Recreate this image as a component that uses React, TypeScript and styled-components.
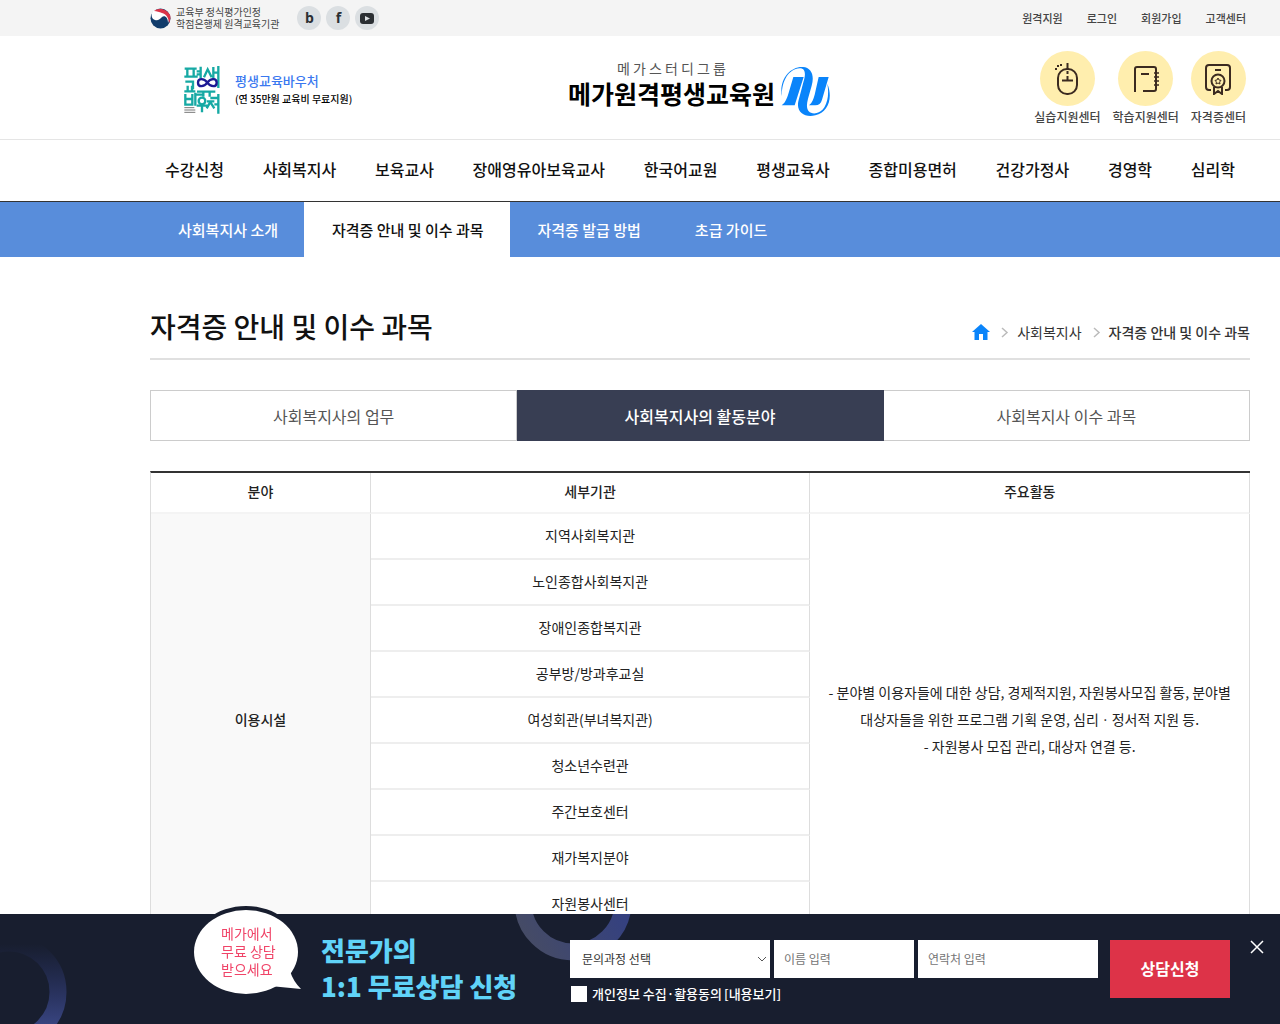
import React from "react";
import styled, { createGlobalStyle } from "styled-components";

const GlobalStyle = createGlobalStyle`
  * { box-sizing: border-box; }
  body {
    margin: 0;
    background: #fff;
    color: #222;
    font-family: "Noto Sans CJK KR", "Noto Sans", sans-serif;
    font-size: 14px;
  }
  a { color: inherit; text-decoration: none; }
  ul { list-style: none; margin: 0; padding: 0; }
  button, input, select { font-family: inherit; border-radius: 0; }
`;

const Inner = styled.div`
  padding: 0 30px 0 150px;
`;

/* top bar */
const TopBar = styled.div`
  background: #f4f4f4;
`;
const TopRow = styled(Inner)`
  display: flex;
  align-items: center;
  height: 36px;
`;
const Certified = styled.p`
  display: flex;
  align-items: center;
  gap: 5px;
  margin: 0 18px 0 0;
  font-size: 10px;
  line-height: 12px;
  color: #444;
`;
const Social = styled.ul`
  display: flex;
  gap: 5px;
`;
const SocialLink = styled.a`
  display: flex;
  align-items: center;
  justify-content: center;
  width: 24px;
  height: 24px;
  border-radius: 50%;
  background: #dbdfe2;
  color: #2b2f33;
  font: 700 14px/24px "Open Sans", sans-serif;
`;
const UserLinks = styled.ul`
  display: flex;
  gap: 24px;
  margin-left: auto;
  padding-right: 4px;
  font-size: 11px;
  font-weight: 500;
  color: #444;
`;

/* header */
const Header = styled.header`
  border-bottom: 1px solid #e5e5e5;
`;
const HeaderRow = styled(Inner)`
  display: grid;
  grid-template-columns: 1fr auto 1fr;
  align-items: center;
  height: 103px;
`;
const Voucher = styled.a`
  display: flex;
  align-items: center;
  gap: 14px;
  padding-left: 34px;
  padding-top: 4px;
`;
const VoucherText = styled.span`
  display: flex;
  flex-direction: column;
  font-size: 10px;
  font-weight: 500;
  line-height: 17px;
  color: #000;
  white-space: nowrap;
`;
const VoucherName = styled.strong`
  font-size: 13px;
  font-weight: 500;
  line-height: 18px;
  color: #3a78f0;
`;
const Brand = styled.a`
  display: flex;
  align-items: flex-end;
  gap: 5px;
  padding-top: 3px;
`;
const BrandText = styled.span`
  display: flex;
  flex-direction: column;
  align-items: center;
  padding-bottom: 6px;
  white-space: nowrap;
`;
const BrandGroup = styled.span`
  font-size: 14px;
  line-height: 14px;
  color: #555;
`;
const BrandName = styled.strong`
  font-size: 25px;
  font-weight: 700;
  line-height: 36px;
  color: #000;
`;
const Centers = styled.ul`
  display: flex;
  justify-content: flex-end;
  gap: 12px;
  padding: 2px 4px 0 0;
`;
const CenterLink = styled.a`
  display: flex;
  flex-direction: column;
  align-items: center;
  gap: 2px;
  font-size: 12px;
  font-weight: 500;
  line-height: 18px;
  color: #444;
  white-space: nowrap;
`;
const CenterIcon = styled.span`
  display: flex;
  align-items: center;
  justify-content: center;
  width: 55px;
  height: 55px;
  border-radius: 50%;
  background: #ffeeae;
`;

/* navigation */
const MainNav = styled.nav`
  padding-bottom: 3px;
  border-bottom: 1px solid #333;
`;
const MainMenu = styled.ul`
  display: flex;
  justify-content: space-between;
  padding: 0 45px 0 165px;
  font-size: 16px;
  font-weight: 500;
  line-height: 58px;
  color: #111;
  white-space: nowrap;
`;
const SubNav = styled.nav`
  background: #588ddb;
`;
const SubMenu = styled.ul`
  display: flex;
  padding: 0 30px 0 150px;
`;
const SubLink = styled.a<{ $active?: boolean }>`
  display: block;
  padding: 0 26px 0 28px;
  font-size: 15px;
  font-weight: 500;
  line-height: 55px;
  background: ${(p) => (p.$active ? "#fff" : "transparent")};
  color: ${(p) => (p.$active ? "#111" : "#fff")};
`;

/* content */
const Main = styled.main`
  padding: 50px 30px 80px 150px;
`;
const TitleRow = styled.div`
  display: flex;
  align-items: flex-end;
  justify-content: space-between;
  padding-bottom: 13px;
  border-bottom: 2px solid #e0e0e0;
`;
const Title = styled.h1`
  margin: 0;
  font-size: 28px;
  font-weight: 500;
  line-height: 38px;
  color: #111;
`;
const Crumbs = styled.ol`
  display: flex;
  align-items: center;
  gap: 11px;
  margin: 0;
  padding: 0;
  list-style: none;
  line-height: 26px;
  color: #333;
`;
const Crumb = styled.li<{ $current?: boolean }>`
  display: flex;
  align-items: center;
  gap: 8px;
  font-weight: ${(p) => (p.$current ? 500 : 400)};
`;
const Tabs = styled.div`
  display: flex;
  margin: 30px 0;
`;
const Tab = styled.button<{ $active?: boolean }>`
  flex: 1;
  height: 51px;
  padding: 0;
  border: 1px solid ${(p) => (p.$active ? "#383e53" : "#ccc")};
  background: ${(p) => (p.$active ? "#383e53" : "#fff")};
  color: ${(p) => (p.$active ? "#fff" : "#555")};
  font-size: 16px;
  font-weight: ${(p) => (p.$active ? 500 : 400)};
  & + & { border-left-width: 0; }
`;
const Table = styled.table`
  width: 100%;
  table-layout: fixed;
  border-collapse: separate;
  border-spacing: 0;
  border-top: 2px solid #333;
  border-left: 1px solid #ddd;
  text-align: center;
  th, td { border-right: 1px solid #ddd; }
`;
const HeadCell = styled.th<{ $width: string }>`
  width: ${(p) => p.$width};
  height: 41px;
  padding: 0 0 3px;
  border-bottom: 2px solid #f4f4f4;
  font-weight: 500;
`;
const GroupCell = styled.th`
  padding: 0 0 4px;
  background: #f9f9f9;
  border-bottom: 1px solid #ddd;
  font-weight: 500;
`;
const Cell = styled.td`
  height: 46px;
  padding: 0 0 2px;
  border-bottom: 2px solid #eee;
  line-height: 27px;
`;
const WorkCell = styled(Cell)`
  white-space: nowrap;
`;

/* consulting bar */
const Bar = styled.aside`
  position: fixed;
  left: 0;
  right: 0;
  bottom: 0;
  height: 110px;
  background: #181e2f;
`;
const Rings = styled.svg`
  position: absolute;
  left: 0;
  top: 0;
`;
const BarRow = styled.div`
  position: relative;
  display: flex;
  align-items: flex-start;
  padding: 0 50px 0 192px;
`;
const Bubble = styled.div`
  position: relative;
  flex: none;
  width: 110px;
  height: 90px;
  margin: -9px 19px 0 0;
  svg { position: absolute; left: 0; top: 0; }
`;
const BubbleText = styled.p`
  position: relative;
  margin: 0;
  padding: 19px 0 0 29px;
  font-size: 14px;
  line-height: 18px;
  color: #f04468;
`;
const Slogan = styled.p`
  margin: 18px 0 0;
  font-size: 26px;
  font-weight: 900;
  line-height: 36px;
  color: #60d3f8;
  white-space: nowrap;
`;
const Form = styled.form`
  display: flex;
  gap: 12px;
  margin: 26px 0 0 auto;
`;
const Fields = styled.div`
  display: flex;
  gap: 4px;
`;
const field = `
  height: 38px;
  border: 0;
  background: #fff;
  color: #333;
  font-size: 12px;
`;
const SelectBox = styled.div`
  position: relative;
  svg { position: absolute; right: 3px; top: 16px; pointer-events: none; }
`;
const Select = styled.select`
  ${field}
  width: 200px;
  padding: 0 12px 2px;
  appearance: none;
`;
const TextField = styled.input<{ $width: number }>`
  ${field}
  width: ${(p) => p.$width}px;
  padding: 0 10px 2px;
  &::placeholder { color: #757575; }
`;
const Agree = styled.div`
  display: flex;
  align-items: center;
  gap: 2px;
  margin-top: 6px;
  font-size: 13px;
  font-weight: 500;
  line-height: 20px;
  color: #fff;
  input {
    appearance: none;
    width: 16px;
    height: 16px;
    margin: 0 3px 0 1px;
    background: #fff;
  }
  input:checked { box-shadow: inset 0 0 0 4px #fff; background: #dd3348; }
`;
const Submit = styled.button`
  width: 120px;
  height: 58px;
  padding: 0 0 2px;
  border: 0;
  background: #dd3348;
  color: #fff;
  font-size: 16px;
  font-weight: 700;
`;
const Close = styled.button`
  position: absolute;
  right: 16px;
  top: 26px;
  display: flex;
  padding: 0;
  border: 0;
  background: none;
`;

const VoucherLogo = () => (
  <svg width="37" height="48" viewBox="0 0 111 144" fill="none" stroke="#16a9a4" strokeWidth="7">
    <path d="M2 8H38M10 8V29M29 8V29M1 32H41M38 16H49M38 25H49M50 2V36" />
    <path d="M60 34L71 10L83 34M88 3V42M88 20H101M103 0V66" />
    <path d="M4 47H27V70M11 59V74M24 59V74M1 76H34" />
    <path d="M39 77H94M58 77V92M77 77V92M35 86H58" />
    <path d="M4 84V116H25V84M4 99H25M34 80V119" />
    <path d="M38 119H70M54 119V139M79 96H101M69 106H91M80 106L68 127M80 110L91 127M103 84V143M91 115H103" />
    <circle cx="54" cy="105" r="10" />
    <path d="M70 50C60 36 42 36 42 50S60 64 70 50C80 36 98 36 98 50S80 64 70 50Z" stroke="#1d1a94" />
    <path d="M1 125H31M1 132H34M1 139H34" stroke="#777" strokeWidth="3" />
  </svg>
);

const BrandMark = () => (
  <svg width="52" height="52" viewBox="18 18 156 156" fill="#0a84fa">
    <path d="M24 112C14 66 45 22 87 24C112 26 122 49 113 80L102 119C94 149 101 165 125 163C151 160 169 124 160 74C178 118 162 160 124 169C93 177 66 160 73 127L88 70C98 39 91 28 77 28C42 30 22 70 24 112Z" />
    <path d="M58 54H89L62 139H23C36 129 40 114 45 98Z" />
    <path d="M134 54H164L144 122C141 133 134 139 124 139H105C115 130 118 121 122 107Z" />
  </svg>
);

const MouseIcon = () => (
  <svg width="26" height="34" viewBox="0 0 26 34" fill="none" stroke="#3b2a20" strokeWidth="2">
    <rect x="4" y="7" width="19" height="25" rx="9" />
    <path d="M13.500 1V7M13.500 9V12M13.500 14V18M8 18.500H19" />
    <path d="M1 7H3M3 4H5M6 3H8" />
  </svg>
);
const NotebookIcon = () => (
  <svg width="26" height="28" viewBox="0 0 26 28" fill="none" stroke="#3b2a20" strokeWidth="2">
    <path d="M2 27V4Q2 2 4 2H21Q23 2 23 4V24Q23 26 21 26H10M8 9H16" />
    <path d="M21 8H26M21 12H26M21 16H26M21 20H26" strokeWidth="1.500" />
  </svg>
);
const CertificateIcon = () => (
  <svg width="26" height="32" viewBox="0 0 26 32" fill="none" stroke="#3b2a20" strokeWidth="2">
    <path d="M6 27H4Q1 27 1 24V5Q1 2 4 2H22Q25 2 25 5V24Q25 27 22 27H20M10 7H16" />
    <circle cx="13" cy="18" r="6.500" />
    <path d="M9 24V31L13 28L17 31V24" />
    <path d="M13 15L14 17L16 17.400L14.600 19L15 21L13 20L11 21L11.400 19L10 17.400L12 17Z" strokeWidth="1" />
  </svg>
);
const Chevron = () => (
  <svg width="8" height="12" viewBox="0 0 8 12" fill="none" stroke="#bbb" strokeWidth="1.500">
    <path d="M1 2L6 6.500L1 11" />
  </svg>
);

const centers = [
  { label: "실습지원센터", icon: <MouseIcon /> },
  { label: "학습지원센터", icon: <NotebookIcon /> },
  { label: "자격증센터", icon: <CertificateIcon /> },
];
const menu = ["수강신청", "사회복지사", "보육교사", "장애영유아보육교사", "한국어교원", "평생교육사", "종합미용면허", "건강가정사", "경영학", "심리학"];
const subMenu = ["사회복지사 소개", "자격증 안내 및 이수 과목", "자격증 발급 방법", "초급 가이드"];
const tabs = ["사회복지사의 업무", "사회복지사의 활동분야", "사회복지사 이수 과목"];
const places = ["지역사회복지관", "노인종합사회복지관", "장애인종합복지관", "공부방/방과후교실", "여성회관(부녀복지관)", "청소년수련관", "주간보호센터", "재가복지분야", "자원봉사센터"];

export default function App() {
  return (
    <>
      <GlobalStyle />
      <TopBar>
        <TopRow>
          <Certified>
            <svg width="21" height="21" viewBox="0 0 21 21">
              <circle cx="10.500" cy="10.500" r="10" fill="#123c6b" />
              <path d="M4 3A10 10 0 0 1 19 15C20 8 15 4 11 5C8 6 5 6 4 3Z" fill="#dc3449" />
              <path d="M2 5C3 1 9 1 14 4C19 7 20 11 18 15C18 10 15 7 12 9C10 11 8 13 5 12C2 11 1 8 2 5Z" fill="#fff" />
              <path d="M4 3C9 -1 17 1 20 7C21 10 20 13 19 15C19 10 16 6 12 5C9 4 7 3 4 3Z" fill="#dc3449" />
            </svg>
            <span>교육부 정식평가인정<br />학점은행제 원격교육기관</span>
          </Certified>
          <Social>
            <li><SocialLink href="#blog">b</SocialLink></li>
            <li><SocialLink href="#facebook">f</SocialLink></li>
            <li>
              <SocialLink href="#youtube" aria-label="YouTube">
                <svg width="14" height="11" viewBox="0 0 14 11">
                  <rect width="14" height="11" rx="3" fill="#2b2f33" />
                  <path d="M5 3L10 5.500L5 8Z" fill="#dbdfe2" />
                </svg>
              </SocialLink>
            </li>
          </Social>
          <UserLinks>
            {["원격지원", "로그인", "회원가입", "고객센터"].map((t) => (
              <li key={t}><a href="#user">{t}</a></li>
            ))}
          </UserLinks>
        </TopRow>
      </TopBar>

      <Header>
        <HeaderRow>
          <Voucher href="#voucher">
            <VoucherLogo />
            <VoucherText>
              <VoucherName>평생교육바우처</VoucherName>
              (연 35만원 교육비 무료지원)
            </VoucherText>
          </Voucher>
          <Brand href="#home">
            <BrandText>
              <BrandGroup>메 가 스 터 디 그 룹</BrandGroup>
              <BrandName>메가원격평생교육원</BrandName>
            </BrandText>
            <BrandMark />
          </Brand>
          <Centers>
            {centers.map((c) => (
              <li key={c.label}>
                <CenterLink href="#center">
                  <CenterIcon>{c.icon}</CenterIcon>
                  {c.label}
                </CenterLink>
              </li>
            ))}
          </Centers>
        </HeaderRow>
      </Header>

      <MainNav>
        <MainMenu>
          {menu.map((t) => <li key={t}><a href="#menu">{t}</a></li>)}
        </MainMenu>
      </MainNav>
      <SubNav>
        <SubMenu>
          {subMenu.map((t, i) => (
            <li key={t}><SubLink href="#sub" $active={i === 1}>{t}</SubLink></li>
          ))}
        </SubMenu>
      </SubNav>

      <Main>
        <TitleRow>
          <Title>자격증 안내 및 이수 과목</Title>
          <Crumbs>
            <Crumb>
              <a href="#home" aria-label="홈">
                <svg width="18" height="16" viewBox="0 0 18 16" display="block">
                  <path d="M9 0L18 8H15.500V16H11V10H7V16H2.500V8H0Z" fill="#0a84fa" />
                </svg>
              </a>
            </Crumb>
            <Crumb><Chevron /><a href="#social">사회복지사</a></Crumb>
            <Crumb $current><Chevron />자격증 안내 및 이수 과목</Crumb>
          </Crumbs>
        </TitleRow>

        <Tabs>
          {tabs.map((t, i) => <Tab key={t} type="button" $active={i === 1}>{t}</Tab>)}
        </Tabs>

        <Table>
          <thead>
            <tr>
              <HeadCell $width="20%">분야</HeadCell>
              <HeadCell $width="40%">세부기관</HeadCell>
              <HeadCell $width="40%">주요활동</HeadCell>
            </tr>
          </thead>
          <tbody>
            {places.map((place, i) => (
              <tr key={place}>
                {i === 0 && <GroupCell rowSpan={places.length}>이용시설</GroupCell>}
                <Cell>{place}</Cell>
                {i === 0 && (
                  <WorkCell rowSpan={places.length}>
                    - 분야별 이용자들에 대한 상담, 경제적지원, 자원봉사모집 활동, 분야별<br />
                    대상자들을 위한 프로그램 기획 운영, 심리ㆍ정서적 지원 등.<br />
                    - 자원봉사 모집 관리, 대상자 연결 등.
                  </WorkCell>
                )}
              </tr>
            ))}
          </tbody>
        </Table>
      </Main>

      <Bar>
        <Rings width="640" height="110" viewBox="0 0 640 110" fill="none">
          <defs>
            <linearGradient id="ringLeft" x1="0" y1="30" x2="0" y2="110" gradientUnits="userSpaceOnUse">
              <stop offset="0" stopColor="#2c3875" stopOpacity="0" />
              <stop offset="1" stopColor="#38447f" />
            </linearGradient>
            <linearGradient id="ringTop" x1="540" y1="46" x2="620" y2="0" gradientUnits="userSpaceOnUse">
              <stop offset="0" stopColor="#454b66" />
              <stop offset="1" stopColor="#35417f" />
            </linearGradient>
          </defs>
          <circle cx="9" cy="78" r="49" stroke="url(#ringLeft)" strokeWidth="17" />
          <circle cx="573" cy="-12" r="50" stroke="url(#ringTop)" strokeWidth="17" />
        </Rings>
        <BarRow>
          <Bubble>
            <svg width="110" height="90" viewBox="0 0 110 90">
              <ellipse cx="54" cy="45" rx="54" ry="44" fill="#181e2f" />
              <ellipse cx="54" cy="47" rx="52" ry="42" fill="#fff" />
              <path d="M78 81L109 84Q101 76 98 66Z" fill="#fff" />
            </svg>
            <BubbleText>메가에서<br />무료 상담<br />받으세요</BubbleText>
          </Bubble>
          <Slogan>전문가의<br />1:1 무료상담 신청</Slogan>
          <Form onSubmit={(e) => e.preventDefault()}>
            <div>
              <Fields>
                <SelectBox>
                  <Select aria-label="문의과정">
                    <option>문의과정 선택</option>
                  </Select>
                  <svg width="10" height="7" viewBox="0 0 10 7" fill="none" stroke="#555">
                    <path d="M1 1L5 5L9 1" />
                  </svg>
                </SelectBox>
                <TextField $width={140} placeholder="이름 입력" aria-label="이름" />
                <TextField $width={180} placeholder="연락처 입력" aria-label="연락처" />
              </Fields>
              <Agree>
                <input type="checkbox" id="agree" />
                <label htmlFor="agree">개인정보 수집·활용동의</label>
                <a href="#privacy">[내용보기]</a>
              </Agree>
            </div>
            <Submit type="submit">상담신청</Submit>
          </Form>
        </BarRow>
        <Close type="button" aria-label="닫기">
          <svg width="14" height="14" viewBox="0 0 14 14" stroke="#fff" strokeWidth="1.500">
            <path d="M1 1L13 13M13 1L1 13" />
          </svg>
        </Close>
      </Bar>
    </>
  );
}
